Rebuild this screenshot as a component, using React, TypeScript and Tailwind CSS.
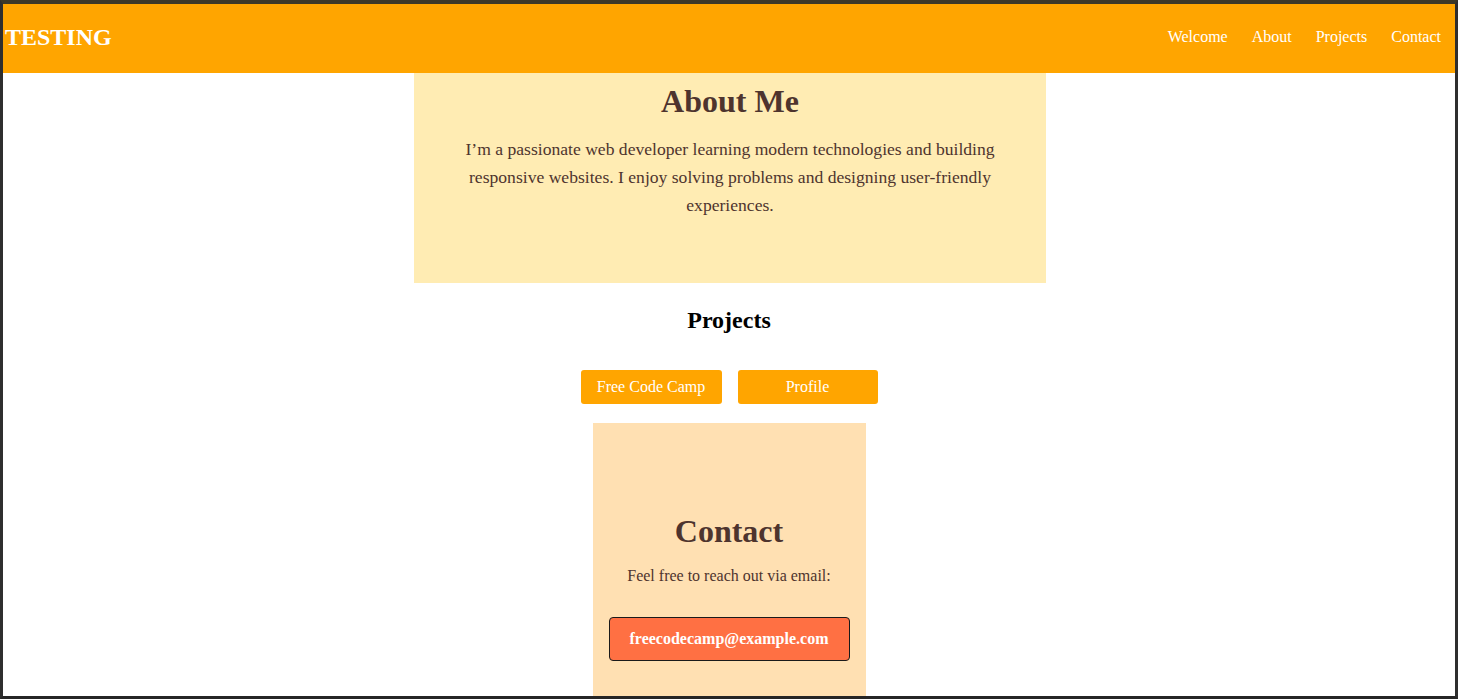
import React from "react";

const navLinks = ["Welcome", "About", "Projects", "Contact"];

const App: React.FC = () => {
  return (
    <div className="h-[699px] w-[1458px] overflow-hidden border-x-[3px] border-t-4 border-b-[3px] border-x-[#2e2e2e] border-t-[#3d3828] border-b-[#262626] bg-white font-['Liberation_Serif',serif]">
      {/* Header */}
      <header className="flex h-[69px] items-center justify-between bg-[#ffa500] pl-[2px] pr-[14px] text-white">
        <h1 className="mb-[3px] text-[24px] font-bold leading-none">TESTING</h1>
        <nav className="mb-[4px] flex gap-6 text-base leading-none">
          {navLinks.map((link) => (
            <a key={link} href={`#${link.toLowerCase()}`}>
              {link}
            </a>
          ))}
        </nav>
      </header>

      {/* About */}
      <div className="pl-[2px]">
        <section className="mx-auto h-[210px] w-[632px] bg-[#ffecb3] px-10 pt-[10px] text-center text-[#4e342e]">
          <h2 className="text-[32px] font-bold leading-[37px]">About Me</h2>
          <p className="mt-[15px] text-[17.6px] leading-[28px]">
            I’m a passionate web developer learning modern technologies and building responsive websites. I enjoy
            solving problems and designing user-friendly experiences.
          </p>
        </section>
      </div>

      {/* Projects */}
      <section className="flex flex-col items-center pt-[23px]">
        <h2 className="text-2xl font-bold leading-[28px] text-black">Projects</h2>
        <div className="mt-[36px] flex gap-4">
          <a className="flex h-[34px] w-[141px] items-center justify-center rounded-[3px] bg-[#ffa500] text-base text-white">
            Free Code Camp
          </a>
          <a className="flex h-[34px] w-[140px] items-center justify-center rounded-[3px] bg-[#ffa500] text-base text-white">
            Profile
          </a>
        </div>
      </section>

      {/* Contact */}
      <section className="mx-auto mt-[19px] h-[300px] w-[273px] bg-[#ffe0b2] px-4 pt-[90px] text-center text-[#4e342e]">
        <h2 className="text-[32px] font-bold leading-[37px]">Contact</h2>
        <p className="mt-[17px] text-base leading-[18px]">Feel free to reach out via email:</p>
        <a className="mt-[32px] flex h-[44px] w-full items-center justify-center rounded-[4px] border border-[#1a1a1a] bg-[#ff7043] text-base font-bold text-white">
          freecodecamp@example.com
        </a>
      </section>
    </div>
  );
};

export default App;
